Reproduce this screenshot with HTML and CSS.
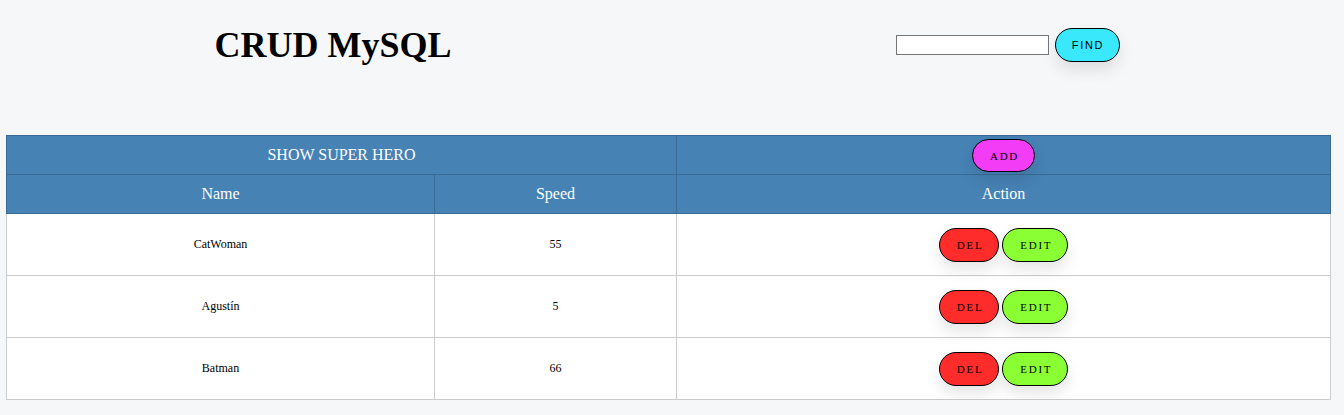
FILE: index.html
```html
<!DOCTYPE html>
<html lang="es">
<head>
<meta charset="utf-8">
<title>CRUD MySQL</title>
<link rel="stylesheet" href="styles.css">
</head>
<body>
<header class="top">
  <div class="top-cell"><h1 class="title">CRUD MySQL</h1></div>
  <div class="top-cell">
    <form class="search">
      <input class="search-input" type="text">
      <button class="btn btn-find" type="button">FIND</button>
    </form>
  </div>
</header>
<table class="heroes">
  <colgroup>
    <col class="c-name">
    <col class="c-speed">
    <col class="c-action">
  </colgroup>
  <thead>
    <tr>
      <th colspan="2">SHOW SUPER HERO</th>
      <th><button class="btn btn-add" type="button">ADD</button></th>
    </tr>
    <tr>
      <th>Name</th>
      <th>Speed</th>
      <th>Action</th>
    </tr>
  </thead>
  <tbody>
    <tr>
      <td>CatWoman</td>
      <td>55</td>
      <td><div class="actions"><button class="btn btn-del" type="button">DEL</button><button class="btn btn-edit" type="button">EDIT</button></div></td>
    </tr>
    <tr>
      <td>Agustín</td>
      <td>5</td>
      <td><div class="actions"><button class="btn btn-del" type="button">DEL</button><button class="btn btn-edit" type="button">EDIT</button></div></td>
    </tr>
    <tr>
      <td>Batman</td>
      <td>66</td>
      <td><div class="actions"><button class="btn btn-del" type="button">DEL</button><button class="btn btn-edit" type="button">EDIT</button></div></td>
    </tr>
  </tbody>
</table>
</body>
</html>
```
FILE: styles.css
```css
* { box-sizing: border-box; }

body {
  margin: 0;
  background: #f6f7f9;
  font-family: "Liberation Serif", "Times New Roman", serif;
  color: #000;
}

.top {
  display: grid;
  grid-template-columns: 1fr 1fr;
  height: 90px;
  align-items: center;
}

.top-cell {
  display: flex;
  justify-content: center;
  align-items: center;
}

.title {
  margin: 0 6px 0 0;
  font-size: 36px;
  font-weight: bold;
  line-height: 1;
}

.search {
  display: flex;
  align-items: center;
  gap: 6px;
  margin: 0;
}

.search-input {
  width: 153px;
  height: 20px;
  border: 1px solid #767676;
  background: #fff;
  padding: 1px 2px;
  margin: 0;
}

.btn {
  font-family: "Liberation Serif", "Times New Roman", serif;
  font-size: 11px;
  font-weight: 500;
  letter-spacing: 1.7px;
  text-transform: uppercase;
  color: #000;
  border: 1px solid #000;
  border-radius: 45px;
  padding: 10px 15px 10px 17px;
  line-height: 12px;
  box-shadow: 0 8px 15px rgba(0, 0, 0, 0.1);
  cursor: pointer;
  margin: 0;
}

.btn-find {
  font-family: "Liberation Sans", Arial, sans-serif;
  background: #3ae8fc;
  padding: 10px 15px 10px 16px;
}

.btn-add {
  background: #f23cf6;
  padding: 10px 15px 9px 17px;
}

.btn-del { background: #ff2c2c; }
.btn-edit { background: #8aff33; }

.heroes {
  margin: 45px 0 0 6px;
  width: 1324px;
  border-collapse: collapse;
  table-layout: fixed;
}

.c-name { width: 428px; }
.c-speed { width: 242px; }
.c-action { width: 654px; }

.heroes th {
  background: #4682b4;
  color: #fff;
  font-weight: normal;
  font-size: 16px;
  height: 39px;
  padding: 0;
  text-align: center;
  border: 1px solid #3a6b95;
}

.heroes td {
  background: #fff;
  font-size: 12px;
  height: 62px;
  padding: 0;
  text-align: center;
  border: 1px solid #cccccc;
}

.actions {
  display: flex;
  justify-content: center;
  align-items: center;
  gap: 3px;
}
```
